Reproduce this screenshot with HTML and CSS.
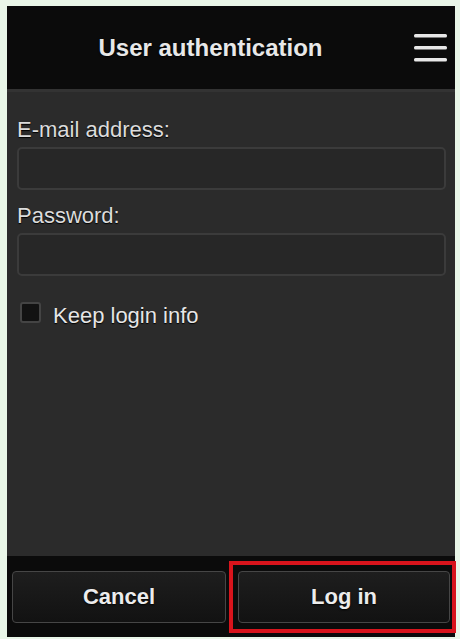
FILE: index.html
```html
<!DOCTYPE html>
<html lang="en">
<head>
<meta charset="utf-8">
<title>User authentication</title>
<link rel="stylesheet" href="styles.css">
</head>
<body>
<div class="frame">
  <header class="header">
    <h1 class="title">User authentication</h1>
    <button class="menu" aria-label="Menu">
      <svg width="33" height="28" viewBox="0 0 33 28" aria-hidden="true">
        <rect x="0" y="0" width="33" height="3.5" rx="1.5" fill="#e8e8e8"/>
        <rect x="0" y="12" width="33" height="3.5" rx="1.5" fill="#e8e8e8"/>
        <rect x="0" y="24" width="33" height="3.5" rx="1.5" fill="#e8e8e8"/>
      </svg>
    </button>
  </header>
  <main class="content">
    <label class="label" for="email">E-mail address:</label>
    <input class="field" id="email" type="email">
    <label class="label label-pw" for="pw">Password:</label>
    <input class="field" id="pw" type="password">
    <div class="keep">
      <span class="checkbox"></span>
      <span class="keep-text">Keep login info</span>
    </div>
  </main>
  <footer class="footer">
    <button class="btn">Cancel</button>
    <div class="btn-wrap">
      <button class="btn">Log in</button>
      <span class="highlight"></span>
    </div>
  </footer>
</div>
</body>
</html>
```
FILE: styles.css
```css
html, body {
  margin: 0;
  padding: 0;
}
body {
  background: #e9f6e8;
  font-family: "Liberation Sans", Arial, sans-serif;
  width: 460px;
  height: 639px;
  overflow: hidden;
}
.frame {
  margin: 6px 0 0 7px;
  width: 448px;
  height: 631px;
  display: flex;
  flex-direction: column;
  background: #2b2b2b;
}
.header {
  height: 83px;
  flex: none;
  background: #0b0b0b;
  border-bottom: 3px solid #333333;
  display: flex;
  align-items: center;
  padding-right: 8px;
}
.title {
  flex: 1;
  margin: 0;
  text-align: center;
  font-size: 24px;
  font-weight: bold;
  color: #e8e8e8;
  line-height: 28px;
  text-shadow: 0 1px 2px #000;
}
.menu {
  width: 33px;
  height: 28px;
  padding: 0;
  margin: 0;
  border: 0;
  background: none;
  display: block;
}
.menu svg {
  display: block;
}
.content {
  flex: 1;
  padding: 26px 9px 0 10px;
  display: flex;
  flex-direction: column;
}
.label {
  font-size: 22px;
  line-height: 24px;
  color: #dcdcdc;
  text-shadow: 0 1px 1px #000;
}
.label-pw {
  margin-top: 14px;
}
.field {
  margin: 5px 0 0;
  height: 43px;
  box-sizing: border-box;
  width: 100%;
  background: #272727;
  border: 2px solid #3b3b3b;
  border-radius: 5px;
  outline: none;
}
.keep {
  margin-top: 26px;
  display: flex;
  align-items: flex-start;
  padding-left: 3px;
}
.checkbox {
  width: 21px;
  height: 21px;
  box-sizing: border-box;
  border: 2px solid #444;
  border-radius: 3px;
  background: #121212;
  flex: none;
}
.keep-text {
  margin-left: 12px;
  margin-top: 2px;
  font-size: 22px;
  line-height: 24px;
  color: #e6e6e6;
  text-shadow: 0 1px 1px #000;
}
.footer {
  height: 81px;
  flex: none;
  box-sizing: border-box;
  background: #0b0b0b;
  display: flex;
  gap: 12px;
  padding: 15px 5px 14px;
}
.btn-wrap {
  flex: 1;
  position: relative;
  display: flex;
}
.btn {
  flex: 1;
  height: 52px;
  margin: 0;
  border: 1px solid #464646;
  border-radius: 4px;
  background: linear-gradient(#1e1e1e, #121212);
  color: #ececec;
  font-family: "Liberation Sans", Arial, sans-serif;
  font-size: 22px;
  font-weight: bold;
  text-shadow: 0 1px 2px #000;
  padding: 0;
}
.highlight {
  position: absolute;
  left: -9px;
  top: -10px;
  right: -6px;
  bottom: -10px;
  border: 4px solid #d8141c;
  box-sizing: border-box;
  pointer-events: none;
}
```
